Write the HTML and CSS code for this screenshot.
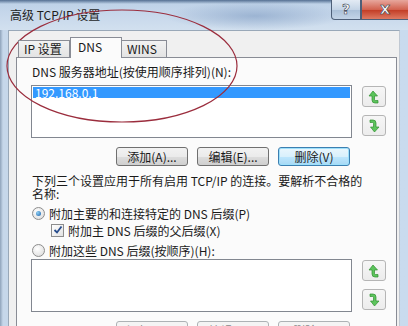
FILE: index.html
```html
<!DOCTYPE html>
<html lang="zh-CN">
<head>
    <meta charset="UTF-8">
    <title>高级 TCP/IP 设置</title>
    <link rel="stylesheet" href="styles.css">
</head>
<body>
    <div class="window">
        <div class="titlebar">
            <span class="title">高级 TCP/IP 设置</span>
            <div class="caption">
                <div class="cap help">?</div>
                <div class="cap close">X</div>
            </div>
        </div>

        <div class="client">
            <div class="tabs">
                <div class="tab">IP 设置</div>
                <div class="tab active">DNS</div>
                <div class="tab">WINS</div>
            </div>

            <div class="panel">
                <div class="label">DNS 服务器地址(按使用顺序排列)(N):</div>

                <div class="list-row">
                    <div class="listbox">
                        <div class="item selected">192.168.0.1</div>
                    </div>
                    <div class="movers">
                        <div class="mover">
                            <svg width="12" height="14" viewBox="0 0 12 14"><path d="M5 1 L1 6 H4 V10 Q4 13 7 13 H10 V10.5 H7.5 Q6.5 10.5 6.5 9.5 V6 H9.5 Z" fill="#5cc45c" stroke="#2f8f2f" stroke-width="0.7"/></svg>
                        </div>
                        <div class="mover">
                            <svg width="12" height="14" viewBox="0 0 12 14"><path d="M6.5 13 L2.5 8 H5.5 V4.5 Q5.5 3.5 4.5 3.5 H2 V1 H5 Q8 1 8 4 V8 H11 Z" fill="#5cc45c" stroke="#2f8f2f" stroke-width="0.7"/></svg>
                        </div>
                    </div>
                </div>

                <div class="button-row">
                    <button class="btn">添加(A)...</button>
                    <button class="btn">编辑(E)...</button>
                    <button class="btn default">删除(V)</button>
                </div>

                <p class="note">下列三个设置应用于所有启用 TCP/IP 的连接。要解析不合格的<br>名称:</p>

                <div class="option first">
                    <span class="radio checked"></span>
                    <span>附加主要的和连接特定的 DNS 后缀(P)</span>
                </div>
                <div class="option sub">
                    <span class="check">
                        <svg width="10" height="10" viewBox="0 0 10 10"><path d="M1.5 5 L4 7.5 L8.5 1.5" fill="none" stroke="#274c8c" stroke-width="1.8"/></svg>
                    </span>
                    <span>附加主 DNS 后缀的父后缀(X)</span>
                </div>
                <div class="option">
                    <span class="radio"></span>
                    <span>附加这些 DNS 后缀(按顺序)(H):</span>
                </div>

                <div class="list-row second">
                    <div class="listbox"></div>
                    <div class="movers">
                        <div class="mover">
                            <svg width="12" height="14" viewBox="0 0 12 14"><path d="M5 1 L1 6 H4 V10 Q4 13 7 13 H10 V10.5 H7.5 Q6.5 10.5 6.5 9.5 V6 H9.5 Z" fill="#5cc45c" stroke="#2f8f2f" stroke-width="0.7"/></svg>
                        </div>
                        <div class="mover">
                            <svg width="12" height="14" viewBox="0 0 12 14"><path d="M6.5 13 L2.5 8 H5.5 V4.5 Q5.5 3.5 4.5 3.5 H2 V1 H5 Q8 1 8 4 V8 H11 Z" fill="#5cc45c" stroke="#2f8f2f" stroke-width="0.7"/></svg>
                        </div>
                    </div>
                </div>

                <div class="button-row">
                    <button class="btn" disabled>添加(D)...</button>
                    <button class="btn" disabled>编辑(T)...</button>
                    <button class="btn" disabled>删除(M)</button>
                </div>
            </div>
        </div>

        <!-- red marker circle drawn over the screenshot -->
        <svg class="marker" width="408" height="326">
            <ellipse cx="122" cy="66" rx="115" ry="56" fill="none" stroke="#9b2d3d" stroke-width="1.2"/>
        </svg>
    </div>
</body>
</html>
```

FILE: styles.css
```css
body {
    margin: 0;
    padding: 0;
    font-family: "Noto Sans CJK SC", sans-serif;
    font-size: 12px;
    color: #1a1a1a;
}

.window {
    position: relative;
    width: 408px;
    height: 326px;
    overflow: hidden;
    background: linear-gradient(to right, #8fa3ba 0, #c6d7ea 3px, #c9dbee 100%);
}

.titlebar {
    height: 30px;
    display: flex;
    background:
        linear-gradient(to bottom, rgba(40, 70, 110, 0.7) 0, rgba(40, 70, 110, 0) 4px),
        radial-gradient(ellipse 90px 14px at 255px 16px, rgba(120, 150, 190, 0.55), rgba(120, 150, 190, 0)),
        linear-gradient(to bottom, #bcd0e7, #d2e0ef);
}

.title {
    padding-left: 10px;
    line-height: 30px;
    color: #1e1e1e;
}

.caption {
    margin-left: auto;
    display: flex;
    align-self: flex-start;
}

.cap {
    height: 19px;
    border: 1px solid #4d5f78;
    border-top: none;
    color: #fff;
    font-family: "DejaVu Sans", sans-serif;
    font-weight: bold;
    text-align: center;
    line-height: 19px;
    -webkit-text-stroke: 0.6px #34404f;
}

.help {
    width: 28px;
    font-size: 14px;
    border-radius: 0 0 0 4px;
    background: linear-gradient(to bottom, #e3ebf4, #c4d4e6 50%, #a9bfd7 51%, #c3d4e7);
}

.close {
    width: 46px;
    font-size: 13px;
    border-right: none;
    background: linear-gradient(to bottom, #e7a79d, #d2624f 50%, #c13a23 51%, #de7a62);
}

.client {
    margin: 0 8px;
    height: 296px;
    box-sizing: border-box;
    border-left: 1px solid #99a8b8;
    border-top: 1px solid #99a8b8;
    border-right: 1px solid #c0c8d2;
    background: #f0f0f0;
    padding: 6px 2px 0 7px;
}

.tabs {
    display: flex;
    align-items: flex-end;
    height: 21px;
    margin: 0 0 -1px 2px;
    position: relative;
    z-index: 1;
}

.tab {
    box-sizing: border-box;
    height: 17px;
    margin-bottom: 1px;
    padding: 0 5px;
    line-height: 15px;
    border: 1px solid #898c95;
    border-bottom: none;
    background: linear-gradient(to bottom, #f2f2f2, #e3e3e3);
}

.tab + .tab {
    border-left: none;
}

.tab:first-child {
    width: 52px;
}

.tab.active {
    width: 52px;
    height: 21px;
    margin-bottom: 0;
    border-left: 1px solid #898c95;
    padding: 0 7px;
    line-height: 17px;
    background: #fbfbfb;
}

.tab.active + .tab {
    border-left: none;
    width: 45px;
}

.panel {
    height: 300px;
    box-sizing: border-box;
    border: 1px solid #898c95;
    background: #fbfbfb;
    padding: 7px 0 0 14px;
}

.label {
    line-height: 14px;
    padding-left: 1px;
}

.list-row {
    display: flex;
    gap: 10px;
    margin-top: 6px;
}

.list-row.second {
    margin-top: 1px;
}

.listbox {
    width: 321px;
    height: 53px;
    box-sizing: border-box;
    border: 1px solid #828790;
    background: #fff;
    padding: 1px;
}

.item {
    height: 11px;
    line-height: 11px;
    padding-left: 2px;
}

.item.selected {
    background: #3399ff;
    color: #fff;
}

.movers {
    display: flex;
    flex-direction: column;
    gap: 8px;
    padding-top: 1px;
}

.mover {
    width: 24px;
    height: 21px;
    box-sizing: border-box;
    border: 1px solid #b5b5b5;
    border-radius: 3px;
    background: linear-gradient(to bottom, #f6f6f6, #ececec);
    display: flex;
    align-items: center;
    justify-content: center;
}

.button-row {
    width: 319px;
    display: flex;
    justify-content: flex-end;
    gap: 9px;
    margin-top: 9px;
}

.btn {
    width: 72px;
    height: 19px;
    padding: 0;
    font-family: "Noto Sans CJK SC", sans-serif;
    font-size: 12px;
    line-height: 17px;
    color: #1a1a1a;
    border: 1px solid #707070;
    border-radius: 3px;
    background: linear-gradient(to bottom, #f2f2f2, #ebebeb 50%, #dddddd 51%, #cfcfcf);
}

.btn.default {
    border-color: #3c7fb1;
    background: linear-gradient(to bottom, #eaf6fd, #d9f0fc 50%, #bee6fd 51%, #a7d9f5);
    box-shadow: inset 0 0 0 1px #9ee0fb;
}

.btn:disabled {
    color: #8a8a8a;
    border-color: #adb2b5;
    background: #f4f4f4;
}

.note {
    width: 350px;
    margin: 8px 0 0;
    line-height: 13px;
    padding-left: 1px;
}

.option {
    display: flex;
    align-items: center;
    gap: 4px;
    height: 16px;
    margin-top: 4px;
    padding-left: 1px;
}

.option.first {
    margin-top: 5px;
}

.option.sub {
    margin-top: 1px;
    padding-left: 20px;
}

.radio {
    width: 11px;
    height: 11px;
    border-radius: 50%;
    border: 1px solid #8d8d8d;
    background: radial-gradient(circle at 40% 35%, #ffffff, #d8d8d8);
    display: flex;
    align-items: center;
    justify-content: center;
}

.radio.checked::after {
    content: "";
    width: 5px;
    height: 5px;
    border-radius: 50%;
    background: radial-gradient(circle at 35% 35%, #8ed0f5, #1b5fa8);
}

.check {
    width: 11px;
    height: 11px;
    border: 1px solid #8d8d8d;
    background: linear-gradient(to bottom right, #ffffff, #e2e2e2);
    display: flex;
    align-items: center;
    justify-content: center;
}

.marker {
    position: absolute;
    left: 0;
    top: 0;
    pointer-events: none;
}
```
